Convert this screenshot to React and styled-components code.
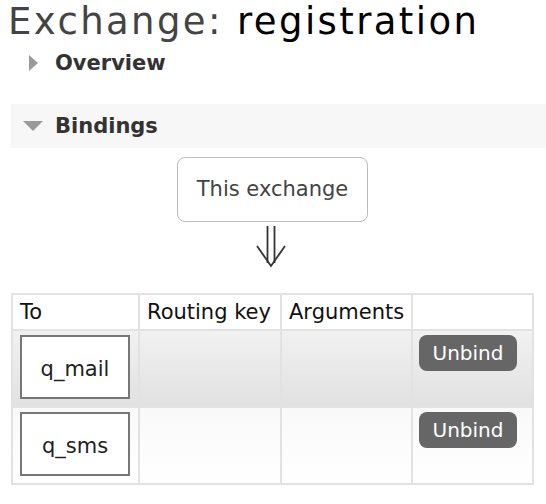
import React from "react";
import styled, { createGlobalStyle } from "styled-components";

const Global = createGlobalStyle`
  html, body { margin: 0; padding: 0; background: #fff; }
  body { font-family: "DejaVu Sans", Verdana, sans-serif; color: #222; }
`;

const Page = styled.div`
  padding: 0 0 0 11px;
`;

const Title = styled.h1`
  margin: 0 0 -3px -3px;
  font-size: 37px;
  line-height: 44px;
  font-weight: normal;
  color: #444;
  letter-spacing: 2.4px;
  white-space: nowrap;
  b { color: #000; font-weight: normal; }
`;

const Section = styled.div`
  margin-bottom: ${(p) => (p.$gap ? p.$gap : 0)}px;
`;

const SectionHead = styled.h2`
  margin: 0 -20px 0 0;
  height: 44px;
  display: flex;
  align-items: center;
  font-size: 21px;
  font-weight: bold;
  color: #333;
  background: ${(p) => (p.$open ? "#f7f7f7" : "transparent")};
`;

const Toggle = styled.span`
  width: 44px;
  display: flex;
  justify-content: center;
  align-items: center;
`;

const Diagram = styled.div`
  display: inline-block;
  text-align: center;
  margin-top: 9px;
`;

const ExchangeBox = styled.div`
  display: inline-block;
  box-sizing: border-box;
  height: 65px;
  padding: 0 19px;
  line-height: 62px;
  border: 1.5px solid #bbb;
  border-radius: 8px;
  font-size: 21px;
  color: #444;
`;

const Arrow = styled.svg`
  display: block;
  margin: 4px auto 0;
  position: relative;
  left: -2px;
`;

const Table = styled.table`
  margin-top: 25px;
  table-layout: fixed;
  width: 521px;
  border-collapse: collapse;
  text-align: left;
  font-size: 21px;
`;

const Th = styled.th`
  font-weight: normal;
  color: #111;
  padding: 4px 7px;
  line-height: 26px;
  border: 2px solid #e2e2e2;
  white-space: nowrap;
`;

const Row = styled.tr`
  td {
    background: ${(p) =>
      p.$alt
        ? "linear-gradient(to bottom, #f9f9f9, #ffffff)"
        : "linear-gradient(to bottom, #f1f1f1, #e1e1e1)"};
  }
`;

const Td = styled.td`
  vertical-align: top;
  padding: 4px 7px 7px;
  border: 2px solid #e2e2e2;
`;

const QueueBox = styled.div`
  box-sizing: border-box;
  width: 110px;
  height: 64px;
  border: 2px solid #777;
  background: #fff;
  display: flex;
  align-items: center;
  justify-content: center;
  padding-top: 3px;
  font-size: 21px;
  color: #222;
`;

const Button = styled.button`
  box-sizing: border-box;
  width: 98px;
  height: 36px;
  border: none;
  border-radius: 8px;
  background: #666;
  color: #fff;
  font-family: "DejaVu Sans", Verdana, sans-serif;
  font-size: 20px;
  padding: 0;
  margin-left: -1px;
  line-height: 36px;
`;

const bindings = [
  { to: "q_mail", key: "", args: "" },
  { to: "q_sms", key: "", args: "" },
];

export default function App() {
  return (
    <Page>
      <Global />
      <Title>
        Exchange: <b>registration</b>
      </Title>
      <Section $gap={19}>
        <SectionHead>
          <Toggle>
            <svg width="11" height="18" viewBox="0 0 11 18">
              <polygon points="1,1 10,9 1,17" fill="#9a9a9a" />
            </svg>
          </Toggle>
          Overview
        </SectionHead>
      </Section>
      <Section>
        <SectionHead $open>
          <Toggle>
            <svg width="20" height="11" viewBox="0 0 20 11">
              <polygon points="0,0 20,0 10,10" fill="#9a9a9a" />
            </svg>
          </Toggle>
          Bindings
        </SectionHead>
        <Diagram>
          <ExchangeBox>This exchange</ExchangeBox>
          <Arrow width="32" height="42" viewBox="0 0 32 42">
            <g stroke="#333" strokeWidth="1.8" fill="none">
              <line x1="12.5" y1="0" x2="12.5" y2="37" />
              <line x1="19.5" y1="0" x2="19.5" y2="37" />
              <polyline points="2,20 16,40 30,20" />
            </g>
          </Arrow>
          <Table>
            <colgroup>
              <col style={{ width: 127 }} />
              <col style={{ width: 142 }} />
              <col style={{ width: 131 }} />
              <col style={{ width: 121 }} />
            </colgroup>
            <thead>
              <tr>
                <Th>To</Th>
                <Th>Routing key</Th>
                <Th>Arguments</Th>
                <Th></Th>
              </tr>
            </thead>
            <tbody>
              {bindings.map((b, i) => (
                <Row key={b.to} $alt={i % 2 === 1}>
                  <Td>
                    <QueueBox>{b.to}</QueueBox>
                  </Td>
                  <Td>{b.key}</Td>
                  <Td>{b.args}</Td>
                  <Td>
                    <Button>Unbind</Button>
                  </Td>
                </Row>
              ))}
            </tbody>
          </Table>
        </Diagram>
      </Section>
    </Page>
  );
}
